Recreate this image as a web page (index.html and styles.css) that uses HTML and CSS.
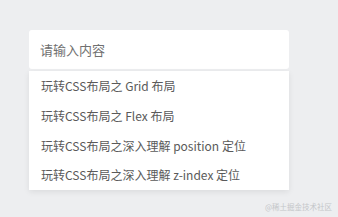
FILE: index.html
```html
<!DOCTYPE html>
<html lang="zh-CN">
<head>
    <meta charset="UTF-8">
    <meta name="viewport" content="width=device-width, initial-scale=1.0">
    <title>搜索建议</title>
    <link rel="stylesheet" href="styles.css">
</head>
<body>
    <div class="search">
        <input type="text" class="search-input" placeholder="请输入内容">
        <ul class="suggest">
            <li>玩转CSS布局之 Grid 布局</li>
            <li>玩转CSS布局之 Flex 布局</li>
            <li>玩转CSS布局之深入理解 position 定位</li>
            <li>玩转CSS布局之深入理解 z-index 定位</li>
        </ul>
    </div>
    <div class="mark">@稀土掘金技术社区</div>
</body>
</html>
```

FILE: styles.css
```css
* {
    box-sizing: border-box;
    font-family: "Noto Sans CJK SC", "Open Sans", sans-serif;
}

body {
    margin: 0;
    width: 338px;
    height: 217px;
    background: #edeef0;
    padding: 30px 0 0 29px;
    position: relative;
}

.search {
    width: 260px;
}

.search-input {
    display: block;
    width: 100%;
    height: 39px;
    border: none;
    outline: none;
    border-radius: 3px;
    background: #fff;
    padding: 0 11px;
    font-size: 13px;
    color: #555;
}

.search-input::placeholder {
    color: #707070;
}

.suggest {
    list-style: none;
    margin: 2px 0 0;
    padding: 0;
    background: #fff;
    box-shadow: 0 2px 6px rgba(0,0,0,0.08);
}

.suggest li {
    height: 29.75px;
    line-height: 29.75px;
    padding: 0 12px;
    font-size: 12px;
    color: #5a5a5a;
    white-space: nowrap;
}

.mark {
    position: absolute;
    right: 6px;
    bottom: 5px;
    font-size: 7.5px;
    color: #c4c6c9;
}
```
